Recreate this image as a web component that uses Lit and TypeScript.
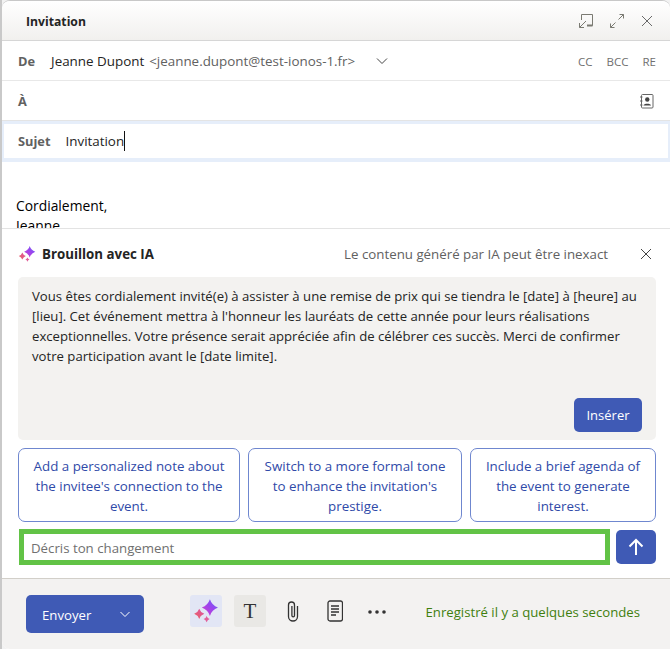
import { LitElement, html, css } from "lit";
import { customElement } from "lit/decorators.js";

const sparkle = (size: number, id: string) => html`<svg width=${size} height=${size} viewBox="0 0 20 20">
  <defs>
    <linearGradient id=${id} x1="0" y1="1" x2="1" y2="0"><stop offset="0" stop-color="#d840c8"/><stop offset=".55" stop-color="#9a44ee"/><stop offset="1" stop-color="#5f6cf5"/></linearGradient>
    <linearGradient id="${id}b" x1="0" y1="1" x2="1" y2="0"><stop offset="0" stop-color="#ea5f5f"/><stop offset="1" stop-color="#dc55a8"/></linearGradient>
  </defs>
  <path fill="url(#${id})" d="M13 1 Q14.500 5.600 19.200 7.400 Q14.500 9.200 13 13.800 Q11.500 9.200 6.800 7.400 Q11.500 5.600 13 1Z"/>
  <path fill="url(#${id}b)" d="M4.800 8.200 Q5.800 11.100 8.700 12.200 Q5.800 13.300 4.800 16.200 Q3.800 13.300 .9 12.200 Q3.800 11.100 4.800 8.200Z"/>
  <path fill="#e2609a" d="M10.500 13.800 Q11.100 15.500 12.800 16.200 Q11.100 16.900 10.500 18.600 Q9.900 16.900 8.200 16.200 Q9.900 15.500 10.500 13.800Z"/>
</svg>`;

@customElement("app-root")
export class AppRoot extends LitElement {
  static styles = css`
    :host { display: block; width: 670px; height: 649px; overflow: hidden; background: linear-gradient(to right, #c9c9c9 2px, #f2f2f2 2px); font-family: "Open Sans", "Noto Sans", sans-serif; color: #242424; }
    * { box-sizing: border-box; }
    .win { height: 649px; margin-left: 2px; border-top: 1px solid #c8c8c8; border-radius: 8px 8px 0 8px; background: #fff; display: flex; flex-direction: column; overflow: hidden; }
    .head { height: 40px; flex: none; display: flex; align-items: center; padding: 2px 16px 0 24px; background: linear-gradient(#fff, #f1f0ee); border-bottom: 1px solid #d6d6d6; font-size: 12.2px; font-weight: 700; }
    .grow { flex: 1; }
    .head svg { display: block; margin-top: -2px; }
    .head .i1 { margin-right: 15px; } .head .i2 { margin-right: 15px; }
    .row { flex: none; display: flex; align-items: center; }
    .de { height: 40px; border-bottom: 1px solid #e8e8e8; padding: 1px 14px 0 16px; font-size: 13.4px; }
    .lab { font-weight: 700; color: #616161; font-size: 12.8px; }
    .name { margin-left: 16px; color: #242424; }
    .mail { margin-left: 5px; color: #616161; }
    .chev { margin-left: 21px; }
    .cc { color: #707070; font-size: 11.5px; margin-left: 14px; }
    .a { height: 40px; padding: 0 16px 0 16px; font-size: 12.5px; }
    .subj { height: 41px; background: #fff; border: solid #e6eefa; border-width: 3px 2px 4px 2px; box-shadow: 0 -1px 0 #e4e4e4; padding: 0 0 0 14px; font-size: 13.4px; }
    .subj .t { margin-left: 15px; color: #242424; border-right: 1px solid #111; line-height: 20px; }
    .body { height: 66px; flex: none; padding: 34px 0 0 14px; font-size: 13.85px; line-height: 20px; color: #000; overflow: hidden; }
    .ai { height: 350px; flex: none; border-top: 1px solid #e3e3e3; display: flex; flex-direction: column; padding: 0 14px 0 16px; }
    .aih { height: 48px; flex: none; display: flex; align-items: center; padding-top: 1px; }
    .aih b { margin-left: 6px; font-size: 13.3px; }
    .note { font-size: 13.3px; color: #616161; margin-right: 32px; }
    .x { margin-right: 4px; }
    .draft { height: 163px; flex: none; background: #f3f2f0; border-radius: 5px; padding: 9px 14px 8px 14px; font-size: 13.17px; line-height: 20px; color: #242424; display: flex; flex-direction: column; }
    .ins { align-self: flex-end; width: 68px; height: 34px; margin-top: auto; background: #3f5ab5; color: #fff; border-radius: 5px; display: flex; align-items: center; justify-content: center; font-size: 13px; }
    .sugs { display: grid; grid-template-columns: 222px 214px 186px; column-gap: 8px; margin-top: 8px; }
    .sug { height: 74px; border: 1px solid #6f87cf; border-radius: 7px; display: flex; align-items: center; justify-content: center; text-align: center; padding: 1px 12px 0; font-size: 13.35px; line-height: 20px; color: #2f4aa8; }
    .inp { display: flex; margin-top: 7px; gap: 6px; align-items: flex-start; }
    .field { width: 591px; height: 36px; margin-left: 1px; border: 5px solid #62c346; background: #fff; display: flex; align-items: center; padding: 1px 0 0 7px; font-size: 13.25px; color: #707070; }
    .go { width: 40px; height: 34px; margin-top: 1px; background: #3f5ab5; border-radius: 5px; display: flex; align-items: center; justify-content: center; }
    .foot { flex: 1; background: #f3f2f1; border-top: 1px solid #d2cfc9; display: flex; align-items: center; padding: 0 30px 0 24px; }
    .send { width: 118px; height: 38px; background: #3f5ab5; color: #fff; border-radius: 5px; display: flex; align-items: center; padding: 0 14px 0 16px; font-size: 13.2px; justify-content: space-between; }
    .send span { margin-top: 2px; }
    .tools { display: flex; align-items: center; margin-left: 46px; gap: 12px; margin-top: -6px; }
    .tool { width: 32px; height: 32px; border-radius: 3px; display: flex; align-items: center; justify-content: center; }
    .tool.s { background: #e2e6f5; } .tool.g { background: #e9e8e5; }
    .T { font-family: "Liberation Serif", serif; font-size: 21px; color: #333; }
    .tool.n { width: 30px; }
    .dots { margin-top: 2px; }
    .saved { margin-left: auto; color: #3f7f0e; font-size: 13.18px; margin-top: -4px; }
  `;
  render() {
    return html`<div class="win">
      <div class="head"><span>Invitation</span><span class="grow"></span>
        <svg class="i1" width="16" height="16" viewBox="0 0 16 16" fill="none" stroke="#7a7a72" stroke-width="1"><path d="M3.500 7V1.500h11v11H9"/><path d="M8 8 1.500 14.500M1.500 10v4.500h4.500"/><path d="M9 12.500h5.500" stroke-width="2"/></svg>
        <svg class="i2" width="16" height="16" viewBox="0 0 16 16" fill="none" stroke="#7a7a72"><path d="M9.500 6.500 14.500 1.500M10.500 1.500h4v4M6.500 9.500 1.500 14.500M1.500 10.500v4h4"/></svg>
        <svg width="14" height="14" viewBox="0 0 14 14" fill="none" stroke="#6a6a6a"><path d="M2 2 12 12M12 2 2 12"/></svg>
      </div>
      <div class="row de"><span class="lab">De</span><span class="name">Jeanne Dupont</span><span class="mail">&lt;jeanne.dupont@test-ionos-1.fr&gt;</span>
        <svg class="chev" width="12" height="8" viewBox="0 0 12 8" fill="none" stroke="#444"><path d="M1 1.500 6 6.500 11 1.500"/></svg>
        <span class="grow"></span><span class="cc">CC</span><span class="cc">BCC</span><span class="cc">RE</span></div>
      <div class="row a"><span class="lab">À</span><span class="grow"></span>
        <svg width="14" height="15" viewBox="0 0 14 15"><rect x="1.500" y=".5" width="11.500" height="13.500" rx="1" fill="none" stroke="#666"/><circle cx="7.300" cy="5.500" r="2.200" fill="#444"/><path d="M3.500 11.500c0-2.500 7.500-2.500 7.500 0z" fill="#444"/><path d="M0 3h2.500M0 7h2.500M0 11h2.500" stroke="#666"/></svg></div>
      <div class="row subj"><span class="lab">Sujet</span><span class="t">Invitation</span></div>
      <div class="body">Cordialement,<br />Jeanne</div>
      <div class="ai">
        <div class="aih">${sparkle(18, "g1")}<b>Brouillon avec IA</b><span class="grow"></span><span class="note">Le contenu généré par IA peut être inexact</span>
          <svg class="x" width="12" height="12" viewBox="0 0 12 12" fill="none" stroke="#444"><path d="M1 1 11 11M11 1 1 11"/></svg></div>
        <div class="draft"><div>Vous êtes cordialement invité(e) à assister à une remise de prix qui se tiendra le [date] à [heure] au [lieu]. Cet événement mettra à l'honneur les lauréats de cette année pour leurs réalisations exceptionnelles. Votre présence serait appréciée afin de célébrer ces succès. Merci de confirmer votre participation avant le [date limite].</div><div class="ins">Insérer</div></div>
        <div class="sugs">
          <div class="sug">Add a personalized note about the invitee's connection to the event.</div>
          <div class="sug">Switch to a more formal tone to enhance the invitation's prestige.</div>
          <div class="sug">Include a brief agenda of the event to generate interest.</div>
        </div>
        <div class="inp"><div class="field">Décris ton changement</div>
          <div class="go"><svg width="16" height="18" viewBox="0 0 16 18" fill="none" stroke="#fff" stroke-width="2"><path d="M8 17V2M1.500 8.500 8 2 14.500 8.500"/></svg></div></div>
      </div>
      <div class="foot">
        <div class="send"><span>Envoyer</span><svg width="10" height="7" viewBox="0 0 10 7" fill="none" stroke="#fff"><path d="M.5 1 5 5.500 9.500 1"/></svg></div>
        <div class="tools">
          <div class="tool s">${sparkle(26, "g2")}</div>
          <div class="tool g"><span class="T">T</span></div>
          <div class="tool n"><svg width="14" height="22" viewBox="0 0 14 22" fill="none" stroke="#333" stroke-width="1.300"><path d="M11.500 6v10.500a4.500 4.500 0 0 1-9 0V5a3 3 0 0 1 6 0v10.500a1.300 1.300 0 0 1-2.600 0V6"/></svg></div>
          <div class="tool n"><svg width="16" height="22" viewBox="0 0 16 22" fill="none" stroke="#333" stroke-width="1.300"><rect x="1" y="1" width="14.500" height="20" rx="2"/><path d="M4 6h8M4 9h8M4 12h8M4 15h5"/></svg></div>
          <div class="tool n"><svg class="dots" width="18" height="4" viewBox="0 0 18 4" fill="#333"><circle cx="2" cy="2" r="1.800"/><circle cx="9" cy="2" r="1.800"/><circle cx="16" cy="2" r="1.800"/></svg></div>
        </div>
        <div class="saved">Enregistré il y a quelques secondes</div>
      </div>
    </div>`;
  }
}
